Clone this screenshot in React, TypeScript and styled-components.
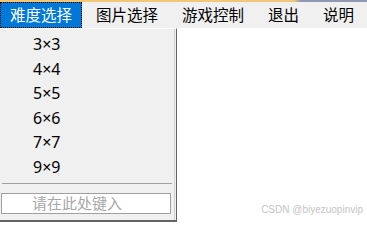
import React from "react";
import styled, { createGlobalStyle } from "styled-components";

const Global = createGlobalStyle`
  html, body { margin: 0; padding: 0; background: #ffffff; overflow: hidden; }
  * { box-sizing: border-box; }
`;

const Window = styled.div`
  position: relative;
  width: 367px;
  height: 222px;
  display: flex;
  flex-direction: column;
  background: #ffffff;
  font-family: "Noto Sans", "Noto Sans CJK SC", sans-serif;
`;

const TopStrip = styled.div`
  height: 2px;
  background: linear-gradient(to right, #f5c777 0%, #f3c67c 80%, #8e98b3 82%, #8e98b3 100%);
`;

const MenuBar = styled.div`
  height: 26px;
  display: flex;
  gap: 4px;
  background: #f0f0f0;
  overflow: hidden;
`;

const MenuItem = styled.div<{ $active?: boolean }>`
  flex-shrink: 0;
  white-space: nowrap;
  padding: 0 10px;
  height: 26px;
  line-height: 25px;
  font-family: "Noto Sans CJK SC", sans-serif;
  font-size: 15.5px;
  color: ${(p) => (p.$active ? "#ffffff" : "#000000")};
  background: ${(p) => (p.$active ? "#0078d7" : "transparent")};
  outline: ${(p) => (p.$active ? "1px dotted #000000" : "none")};
  outline-offset: -1px;
`;

const Content = styled.div`
  flex: 1;
  background: #ffffff;
`;

const Dropdown = styled.div`
  position: absolute;
  top: 28px;
  left: 0;
  width: 177px;
  height: 194px;
  background: #f0f0f0;
  border-top: 1px solid #ffffff;
  border-right: 1px solid #646464;
  border-bottom: 2px solid #646464;
  box-shadow: inset -1px 0 0 #f0f0f0, inset -2px 0 0 #d2d2d2;
  padding-top: 3px;
  display: flex;
  flex-direction: column;
`;

const DropItem = styled.div`
  height: 24.5px;
  line-height: 24.5px;
  padding-left: 33px;
  font-size: 16px;
  color: #000000;
  white-space: nowrap;
`;

const Separator = styled.div`
  margin: 4px 4px 0 2px;
  height: 1px;
  background: #a0a0a0;
`;

const InputBox = styled.div`
  margin: 9px 0 0 1px;
  width: 170px;
  height: 21px;
  border: 1px solid #a0a0a0;
  background: #ffffff;
  padding-left: 30px;
  font-family: "Noto Sans CJK SC", sans-serif;
  font-size: 15px;
  line-height: 18px;
  color: #a8a8a8;
  white-space: nowrap;
`;

const Watermark = styled.div`
  position: absolute;
  right: 4px;
  bottom: 7px;
  font-family: "Liberation Sans", Arial, sans-serif;
  font-size: 10px;
  color: #c4c4c4;
  white-space: nowrap;
`;

const menus = ["难度选择", "图片选择", "游戏控制", "退出", "说明"];
const levels = ["3×3", "4×4", "5×5", "6×6", "7×7", "9×9"];

export default function App() {
  return (
    <Window>
      <Global />
      <TopStrip />
      <MenuBar>
        {menus.map((m, i) => (
          <MenuItem key={m} $active={i === 0}>
            {m}
          </MenuItem>
        ))}
      </MenuBar>
      <Content />
      <Dropdown>
        {levels.map((l) => (
          <DropItem key={l}>{l}</DropItem>
        ))}
        <Separator />
        <InputBox>请在此处键入</InputBox>
      </Dropdown>
      <Watermark>CSDN @biyezuopinvip</Watermark>
    </Window>
  );
}
